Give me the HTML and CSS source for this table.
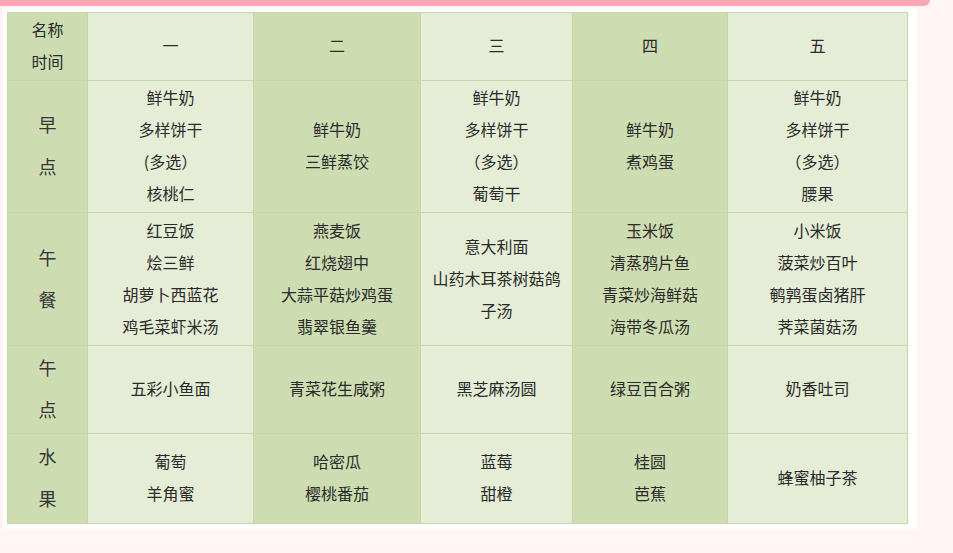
FILE: index.html
```html
<!DOCTYPE html>
<html lang="zh">
<head>
<meta charset="utf-8">
<link rel="stylesheet" href="styles.css">
</head>
<body>
<div class="topbar"></div>
<div class="card">
<table class="menu">
<colgroup>
<col class="c0"><col class="c1"><col class="c2"><col class="c3"><col class="c4"><col class="c5">
</colgroup>
<tr class="head">
<td class="d">名称<br>时间</td>
<td class="l">一</td>
<td class="d">二</td>
<td class="l">三</td>
<td class="d">四</td>
<td class="l">五</td>
</tr>
<tr class="r1">
<td class="d lab">早<br>点</td>
<td class="l">鲜牛奶<br>多样饼干<br>(多选）<br>核桃仁</td>
<td class="d">鲜牛奶<br>三鲜蒸饺</td>
<td class="l">鲜牛奶<br>多样饼干<br>（多选）<br>葡萄干</td>
<td class="d">鲜牛奶<br>煮鸡蛋</td>
<td class="l">鲜牛奶<br>多样饼干<br>（多选）<br>腰果</td>
</tr>
<tr class="r2">
<td class="d lab">午<br>餐</td>
<td class="l">红豆饭<br>烩三鲜<br>胡萝卜西蓝花<br>鸡毛菜虾米汤</td>
<td class="d">燕麦饭<br>红烧翅中<br>大蒜平菇炒鸡蛋<br>翡翠银鱼羹</td>
<td class="l">意大利面<br>山药木耳茶树菇鸽<br>子汤</td>
<td class="d">玉米饭<br>清蒸鸦片鱼<br>青菜炒海鲜菇<br>海带冬瓜汤</td>
<td class="l">小米饭<br>菠菜炒百叶<br>鹌鹑蛋卤猪肝<br>荠菜菌菇汤</td>
</tr>
<tr class="r3">
<td class="d lab">午<br>点</td>
<td class="l">五彩小鱼面</td>
<td class="d">青菜花生咸粥</td>
<td class="l">黑芝麻汤圆</td>
<td class="d">绿豆百合粥</td>
<td class="l">奶香吐司</td>
</tr>
<tr class="r4">
<td class="d lab">水<br>果</td>
<td class="l">葡萄<br>羊角蜜</td>
<td class="d">哈密瓜<br>樱桃番茄</td>
<td class="l">蓝莓<br>甜橙</td>
<td class="d">桂圆<br>芭蕉</td>
<td class="l">蜂蜜柚子茶</td>
</tr>
</table>
</div>
</body>
</html>
```

FILE: styles.css
```css
html, body {
  margin: 0;
  padding: 0;
}
body {
  background: #fff5f5;
  width: 953px;
  height: 553px;
  overflow: hidden;
  font-family: "Noto Sans CJK SC", "Noto Sans", sans-serif;
}
.topbar {
  width: 930px;
  height: 6px;
  background: #ffa6b6;
  border-bottom-right-radius: 12px;
}
.card {
  margin: 2px 0 0 3px;
  width: 906px;
  padding: 4px 4px 5px 4px;
  background: #ffffff;
}
.menu {
  border-collapse: collapse;
  table-layout: fixed;
  width: 900px;
  color: #2a2a2a;
  font-size: 16px;
  line-height: 32px;
  text-align: center;
}
.c0 { width: 80px; }
.c1 { width: 166px; }
.c2 { width: 167px; }
.c3 { width: 152px; }
.c4 { width: 155px; }
.c5 { width: 180px; }
.menu td {
  border: 1px solid #c6d7a7;
  padding: 0 0 3px 0;
  vertical-align: middle;
}
.menu td.l { background: #e5edd6; }
.menu td.d { background: #cddcb1; }
.menu td.lab {
  font-size: 18px;
  line-height: 42px;
  color: #353535;
}
.head td { height: 63px; line-height: 32px; }
.r1 td { height: 128px; }
.r2 td { height: 129px; }
.r3 td { height: 84px; }
.r4 td { height: 86px; }
```
